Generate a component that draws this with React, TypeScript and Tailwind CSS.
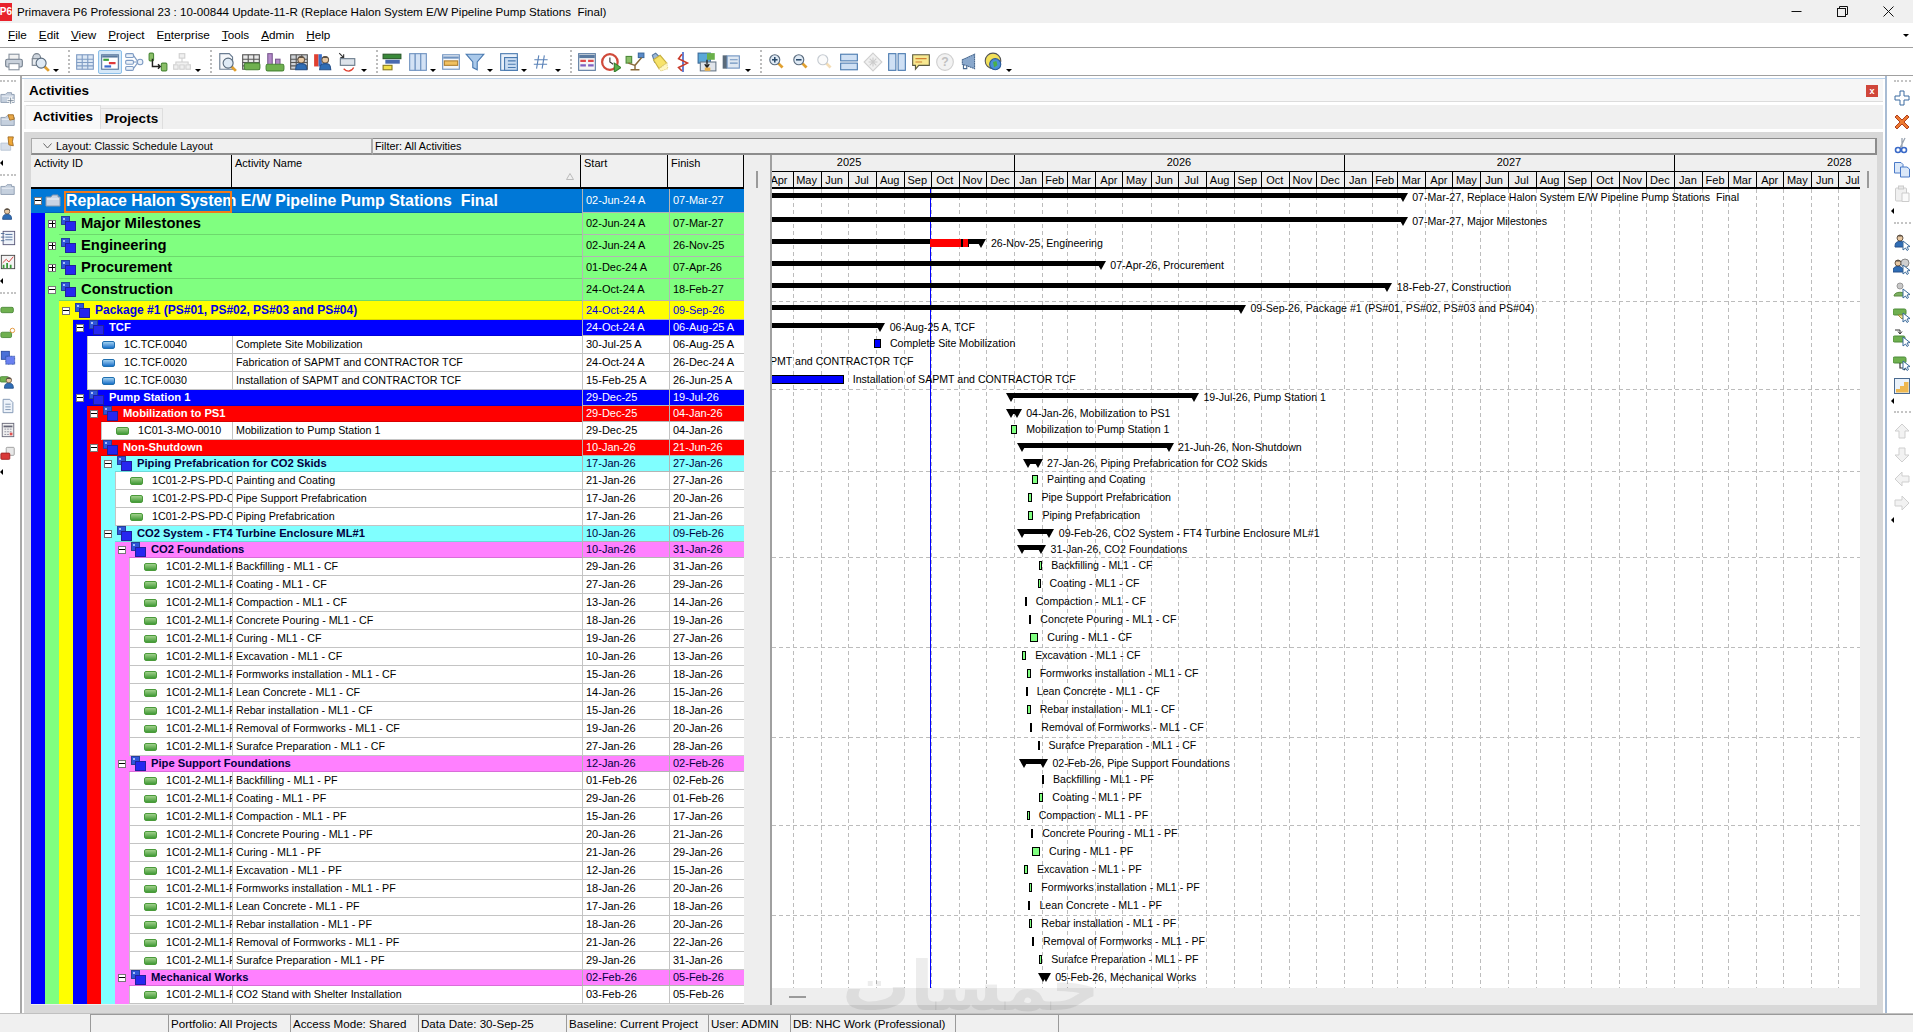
import type { ReactNode } from "react";

// ── timescale ──
const GANTT_X = 772;
const PX_PER_DAY = 0.904;
const MONTHS = ["Jan", "Feb", "Mar", "Apr", "May", "Jun", "Jul", "Aug", "Sep", "Oct", "Nov", "Dec"];

const toDays = (s: string) => {
  const [d, m, y] = s.replace(" A", "").split("-");
  return (Date.UTC(2000 + Number(y), MONTHS.indexOf(m), Number(d)) - Date.UTC(2026, 0, 1)) / 86400000;
};
const xOf = (s: string) => 1014 - GANTT_X + toDays(s) * PX_PER_DAY;
const monthX = (y: number, m: number) =>
  1014 - GANTT_X + ((Date.UTC(y, m, 1) - Date.UTC(2026, 0, 1)) / 86400000) * PX_PER_DAY;

// ── row data ──
type Row = {
  id?: string;
  name: string;
  start: string;
  finish: string;
  level: number;
  band?: boolean;
  open?: boolean;
  blue?: boolean;
  h: number;
};

const band = (level: number, name: string, start: string, finish: string, h = 16, open = true): Row => ({
  level,
  name,
  start,
  finish,
  h,
  open,
  band: true,
});
const act = (level: number, id: string, name: string, start: string, finish: string, blue = false): Row => ({
  level,
  id,
  name,
  start,
  finish,
  h: 18,
  blue,
});

const mlRows = (tag: string, dates: string[][]) =>
  [
    "Backfilling",
    "Coating",
    "Compaction",
    "Concrete Pouring",
    "Curing",
    "Excavation",
    "Formworks installation",
    "Lean Concrete",
    "Rebar installation",
    "Removal of Formworks",
    "Surafce Preparation",
  ].map((n, i) => act(6, "1C01-2-ML1-PS-FD-0010", `${n} - ML1 - ${tag}`, dates[i][0], dates[i][1]));

const rows: Row[] = [
  band(0, "Replace Halon System E/W Pipeline Pump Stations  Final", "02-Jun-24 A", "07-Mar-27", 24),
  band(1, "Major Milestones", "02-Jun-24 A", "07-Mar-27", 22, false),
  band(1, "Engineering", "02-Jun-24 A", "26-Nov-25", 22, false),
  band(1, "Procurement", "01-Dec-24 A", "07-Apr-26", 22, false),
  band(1, "Construction", "24-Oct-24 A", "18-Feb-27", 22),
  band(2, "Package #1 (PS#01, PS#02, PS#03 and PS#04)", "24-Oct-24 A", "09-Sep-26", 19),
  band(3, "TCF", "24-Oct-24 A", "06-Aug-25 A"),
  act(3, "1C.TCF.0040", "Complete Site Mobilization", "30-Jul-25 A", "06-Aug-25 A", true),
  act(3, "1C.TCF.0020", "Fabrication of SAPMT and CONTRACTOR TCF", "24-Oct-24 A", "26-Dec-24 A", true),
  act(3, "1C.TCF.0030", "Installation of SAPMT and CONTRACTOR TCF", "15-Feb-25 A", "26-Jun-25 A", true),
  band(3, "Pump Station 1", "29-Dec-25", "19-Jul-26"),
  band(4, "Mobilization to PS1", "29-Dec-25", "04-Jan-26"),
  act(4, "1C01-3-MO-0010", "Mobilization to Pump Station 1", "29-Dec-25", "04-Jan-26"),
  band(4, "Non-Shutdown", "10-Jan-26", "21-Jun-26"),
  band(5, "Piping Prefabrication for CO2 Skids", "17-Jan-26", "27-Jan-26"),
  act(5, "1C01-2-PS-PD-CO-0010", "Painting and Coating", "21-Jan-26", "27-Jan-26"),
  act(5, "1C01-2-PS-PD-CO-0020", "Pipe Support Prefabrication", "17-Jan-26", "20-Jan-26"),
  act(5, "1C01-2-PS-PD-CO-0030", "Piping Prefabrication", "17-Jan-26", "21-Jan-26"),
  band(5, "CO2 System - FT4 Turbine Enclosure ML#1", "10-Jan-26", "09-Feb-26"),
  band(6, "CO2 Foundations", "10-Jan-26", "31-Jan-26"),
  ...mlRows("CF", [
    ["29-Jan-26", "31-Jan-26"],
    ["27-Jan-26", "29-Jan-26"],
    ["13-Jan-26", "14-Jan-26"],
    ["18-Jan-26", "19-Jan-26"],
    ["19-Jan-26", "27-Jan-26"],
    ["10-Jan-26", "13-Jan-26"],
    ["15-Jan-26", "18-Jan-26"],
    ["14-Jan-26", "15-Jan-26"],
    ["15-Jan-26", "18-Jan-26"],
    ["19-Jan-26", "20-Jan-26"],
    ["27-Jan-26", "28-Jan-26"],
  ]),
  band(6, "Pipe Support Foundations", "12-Jan-26", "02-Feb-26"),
  ...mlRows("PF", [
    ["01-Feb-26", "02-Feb-26"],
    ["29-Jan-26", "01-Feb-26"],
    ["15-Jan-26", "17-Jan-26"],
    ["20-Jan-26", "21-Jan-26"],
    ["21-Jan-26", "29-Jan-26"],
    ["12-Jan-26", "15-Jan-26"],
    ["18-Jan-26", "20-Jan-26"],
    ["17-Jan-26", "18-Jan-26"],
    ["18-Jan-26", "20-Jan-26"],
    ["21-Jan-26", "22-Jan-26"],
    ["29-Jan-26", "31-Jan-26"],
  ]),
  band(6, "Mechanical Works", "02-Feb-26", "05-Feb-26"),
  act(6, "1C01-2-ML1-PS-ME-0010", "CO2 Stand with Shelter Installation", "03-Feb-26", "05-Feb-26"),
];

const STRIPES = ["bg-[#0000ff]", "bg-[#80ff80]", "bg-[#ffff00]", "bg-[#0000ff]", "bg-[#ff0000]", "bg-[#80ffff]", "bg-[#ff80ff]"];
const BANDS = [
  "bg-[#0078d7] text-white",
  "bg-[#80ff80] text-black",
  "bg-[#ffff00] text-[#0000e0]",
  "bg-[#0000ff] text-white",
  "bg-[#ff0000] text-white",
  "bg-[#80ffff] text-[#000040]",
  "bg-[#ff80ff] text-[#000040]",
];
const TITLE_SIZE = ["text-[15.9px]", "text-[14.8px]", "text-[12px]", "text-[11.2px]", "text-[11.2px]", "text-[11.2px]", "text-[11.2px]"];

// ── toolbar icons ──
const Ico = ({ children, s = 18 }: { children: ReactNode; s?: number }) => (
  <svg width={s} height={s} viewBox="0 0 18 18" fill="none" strokeWidth="1">
    {children}
  </svg>
);
const Person = ({ x = 5, y = 2 }: { x?: number; y?: number }) => (
  <g transform={`translate(${x} ${y})`}>
    <circle cx="4" cy="4" r="3" fill="#e8c9a4" stroke="#6b5a48" />
    <path d="M1 3.5 C1 0 7 0 7 3.5 L6 2.5 L2 2.5Z" fill="#5a5147" />
    <path d="M-1 13 C-1 8 1 7.5 4 7.5 C7 7.5 9 8 9 13Z" fill="#2f6db5" stroke="#27518a" />
  </g>
);
const Pill = ({ x = 1, y = 6, w = 15, c = "#6fb04f" }: { x?: number; y?: number; w?: number; c?: string }) => (
  <rect x={x} y={y} width={w} height="6" rx="1.5" fill={c} stroke="#4d8a3a" />
);
const Lens = ({ x = 8, y = 8, c = "#dfeaf5", sign = "" }: { x?: number; y?: number; c?: string; sign?: string }) => (
  <g transform={`translate(${x} ${y})`}>
    <path d="M4 4 L8 8" stroke="#e0a030" strokeWidth="2.5" />
    <circle cx="1" cy="1" r="4.5" fill={c} stroke="#5a6b7d" />
    {sign && <path d="M-1.5 1 H3.5" stroke="#2a4a6a" strokeWidth="1.4" />}
    {sign === "+" && <path d="M1 -1.5 V3.5" stroke="#2a4a6a" strokeWidth="1.4" />}
  </g>
);
const Folder = ({ c = "#c5d0de" }: { c?: string }) => (
  <g>
    <path d="M1 5 H6 L8 3 H13 V5 H16 V14 H1Z" fill={c} stroke="#8d9cb0" />
    <path d="M2 7 H15" stroke="#eef2f7" />
  </g>
);
const Grid = ({ c = "#dde8f5", s = "#7f9cc4" }: { c?: string; s?: string }) => (
  <g stroke={s}>
    <rect x="1.5" y="2.5" width="15" height="13" fill={c} />
    <path d="M1.5 6.5 H16.5 M1.5 9.5 H16.5 M1.5 12.5 H16.5 M6.5 2.5 V15.5 M11.5 2.5 V15.5" />
  </g>
);
const Ptr = () => <path d="M10 8 L10 17 L12.5 15 L14 17.5 L15.5 16.5 L14 14 L17 13.5Z" fill="#fff" stroke="#3a6a9a" />;

const I: Record<string, ReactNode> = {
  print: (
    <Ico s={20}>
      <rect x="4.5" y="2" width="9" height="5" fill="#f2f2f2" stroke="#8a94a0" />
      <rect x="1.5" y="6.5" width="15" height="7" rx="1.5" fill="#c8d0da" stroke="#75808e" />
      <rect x="4.5" y="10.5" width="9" height="5.5" fill="#fff" stroke="#8a94a0" />
    </Ico>
  ),
  report: (
    <Ico s={20}>
      <circle cx="6" cy="5" r="3.5" fill="#cfd6de" stroke="#77818d" />
      <rect x="2" y="6" width="9" height="6" fill="#e8ecf0" stroke="#77818d" />
      <Lens x={9} y={9} />
    </Ico>
  ),
  table: (
    <Ico s={20}>
      <Grid />
    </Ico>
  ),
  gantt: (
    <Ico s={20}>
      <rect x="1.5" y="2.5" width="15" height="13" fill="#fff" stroke="#58789e" />
      <path d="M2 4 H16" stroke="#58789e" strokeWidth="2" />
      <path d="M3 7 H8" stroke="#3aa03a" strokeWidth="2" />
      <path d="M8 10 H14" stroke="#e03a3a" strokeWidth="2" />
      <path d="M4 13 H10" stroke="#3a6ad0" strokeWidth="2" />
    </Ico>
  ),
  nodes: (
    <Ico s={20}>
      <g fill="#eaf1f9" stroke="#7f9cc4">
        <rect x="1.5" y="1.5" width="7" height="3.5" rx="1" />
        <rect x="1.5" y="7.5" width="7" height="3.5" rx="1" />
        <rect x="1.5" y="13" width="7" height="3.5" rx="1" />
        <circle cx="14.5" cy="9" r="2.5" />
        <path d="M8.5 3 L12 8 M8.5 9 H12 M8.5 15 L12 10" />
      </g>
    </Ico>
  ),
  net: (
    <Ico s={20}>
      <rect x="1" y="1" width="4" height="7" rx="1" fill="#8bbf68" stroke="#4d8a3a" />
      <rect x="12" y="10" width="5" height="7" rx="1" fill="#8bbf68" stroke="#4d8a3a" />
      <path d="M4 6 V13 H11 M9 11 L11 13 L9 15" stroke="#222" strokeWidth="1.3" />
    </Ico>
  ),
  org: (
    <Ico s={20}>
      <g fill="#f0f0f0" stroke="#d0d0d0">
        <rect x="6.5" y="1.5" width="5" height="4" />
        <rect x="1.5" y="11.5" width="4" height="4" />
        <rect x="7" y="11.5" width="4" height="4" />
        <rect x="12.5" y="11.5" width="4" height="4" />
        <path d="M9 5.5 V9 M3.5 11 V9 H14.5 V11" />
      </g>
    </Ico>
  ),
  docA: (
    <Ico s={20}>
      <path d="M2.5 1.5 H11 L14 4.5 V15.5 H2.5Z" fill="#f5f7fa" stroke="#6b7d92" />
      <Lens x={9} y={9} />
    </Ico>
  ),
  gridGreen: (
    <Ico s={20}>
      <Grid c="#e8e8e8" s="#555" />
      <Pill x={3} y={10} w={14} />
    </Ico>
  ),
  barsGreen: (
    <Ico s={20}>
      <rect x="2.5" y="1.5" width="4" height="11" fill="#b489c9" stroke="#7a5a90" />
      <rect x="9.5" y="6.5" width="4" height="6" fill="#b489c9" stroke="#7a5a90" />
      <Pill x={1} y={11} w={16} />
    </Ico>
  ),
  gridPerson: (
    <Ico s={20}>
      <Grid c="#cfd2d6" s="#555" />
      <Person x={7} y={3} />
    </Ico>
  ),
  colorPerson: (
    <Ico s={20}>
      <rect x="1" y="2" width="4" height="11" fill="#e04030" />
      <rect x="5" y="2" width="3" height="11" fill="#3a70c8" />
      <Person x={7} y={3} />
    </Ico>
  ),
  moveBar: (
    <Ico s={20}>
      <path d="M2 1 L6 5 M6 2 V5 H3" stroke="#333" />
      <rect x="3" y="6" width="13" height="6" fill="#dde3ea" stroke="#6a7a8a" />
      <path d="M6 15 C9 18 13 18 15 14" stroke="#e04030" strokeWidth="1.2" />
    </Ico>
  ),
  stack: (
    <Ico s={20}>
      <rect x="1" y="2" width="16" height="4" fill="#3a8a3a" stroke="#2a5a2a" />
      <rect x="3" y="7" width="13" height="3.5" fill="#4a6ab0" />
      <rect x="1" y="12" width="8" height="4" fill="#f2e04a" stroke="#887a20" />
    </Ico>
  ),
  cols: (
    <Ico s={20}>
      <g fill="#d3e2f5" stroke="#6f93c0">
        <rect x="1.5" y="1.5" width="5" height="15" />
        <rect x="6.5" y="1.5" width="5" height="15" />
        <rect x="11.5" y="1.5" width="5" height="15" />
      </g>
    </Ico>
  ),
  cal: (
    <Ico s={20}>
      <rect x="1.5" y="2.5" width="15" height="13" fill="#f4f7fb" stroke="#6f93c0" />
      <path d="M2 5 H16" stroke="#6f93c0" strokeWidth="2" />
      <rect x="3" y="8" width="12" height="4" fill="#f0c060" stroke="#b08030" />
    </Ico>
  ),
  filter: (
    <Ico s={20}>
      <path d="M1 2 H17 L11 9 V16 L7 14 V9Z" fill="#aac9ea" stroke="#4a7ab0" />
    </Ico>
  ),
  layout: (
    <Ico s={20}>
      <rect x="1.5" y="1.5" width="15" height="15" fill="#e8f0fa" stroke="#4a7ab0" />
      <rect x="5" y="5" width="11.5" height="11.5" fill="#c8dcf2" stroke="#4a7ab0" />
      <path d="M8 8 H15 M8 11 H15 M8 14 H15" stroke="#4a7ab0" />
    </Ico>
  ),
  hash: (
    <Ico s={20}>
      <path d="M7 3 L5 15 M12 3 L10 15 M3 7 H15 M2.5 11 H14.5" stroke="#5a82b8" />
    </Ico>
  ),
  tableColor: (
    <Ico s={20}>
      <rect x="1.5" y="1.5" width="15" height="15" fill="#f5f5f5" stroke="#5a7aa0" />
      <path d="M2 4 H16" stroke="#5a7aa0" strokeWidth="3" />
      <path d="M3 8 H8 M10 8 H15" stroke="#e04848" strokeWidth="2" />
      <path d="M3 12 H8 M10 12 H15" stroke="#8060c0" strokeWidth="2" />
    </Ico>
  ),
  clock: (
    <Ico s={20}>
      <circle cx="8" cy="9" r="7" fill="#fff" stroke="#d04a3a" strokeWidth="2" />
      <path d="M8 5 V9 L11 11" stroke="#333" />
      <path d="M12 10 L18 14 L12 18Z" fill="#5ab04a" stroke="#3a8030" />
    </Ico>
  ),
  tree: (
    <Ico s={20}>
      <rect x="1" y="4" width="5" height="6" fill="#8bbf68" stroke="#4d8a3a" />
      <rect x="12" y="1" width="5" height="4" fill="#5a8ac8" stroke="#3a6aa0" />
      <path d="M3 10 L9 12 L15 5 M9 12 V16 M5 16 H13" stroke="#8a6a3a" strokeWidth="1.3" />
    </Ico>
  ),
  lights: (
    <Ico s={20}>
      <path d="M3 3 L6 1 L10 5 L5 9Z" fill="#9cb8d8" stroke="#5a7aa0" />
      <path d="M4 7 L10 3 L16 10 L9 15Z" fill="#f7e36a" stroke="#c8b040" />
      <path d="M9 15 L16 10 L17 15 L11 17Z" fill="#fff7c0" stroke="#e0d080" strokeDasharray="1 1" />
    </Ico>
  ),
  redLine: (
    <Ico s={20}>
      <path d="M9 0 V18" stroke="#2a50c0" strokeWidth="1.3" />
      <path d="M8 2 L5 6 L13 10 L5 14 L8 17" stroke="#c83a2a" strokeWidth="1.4" />
    </Ico>
  ),
  monitor: (
    <Ico s={20}>
      <rect x="1" y="1" width="11" height="9" fill="#5aa8d8" stroke="#3a6a9a" />
      <rect x="9" y="1" width="7" height="6" fill="#6ab04a" />
      <rect x="3" y="9" width="14" height="8" fill="#e0e4ea" stroke="#6a7a8a" />
      <path d="M9 7 V13 M7 11 L9 14 L11 11" stroke="#222" strokeWidth="1.2" />
      <rect x="7" y="14" width="5" height="3" fill="#e8b050" />
    </Ico>
  ),
  panel: (
    <Ico s={20}>
      <rect x="1.5" y="3" width="4" height="12" fill="#5a6a7a" />
      <rect x="5.5" y="3.5" width="11" height="11" fill="#dfe8f2" stroke="#6f93c0" />
      <path d="M8 7 H15 M8 10 H15" stroke="#6f93c0" />
    </Ico>
  ),
  zoomIn: (
    <Ico s={20}>
      <Lens x={6} y={6} sign="+" />
    </Ico>
  ),
  zoomOut: (
    <Ico s={20}>
      <Lens x={6} y={6} sign="-" />
    </Ico>
  ),
  zoomFit: (
    <Ico s={20}>
      <g opacity="0.35">
        <Lens x={6} y={6} c="#f5f5f5" />
      </g>
    </Ico>
  ),
  hPanes: (
    <Ico s={20}>
      <g fill="#cfe0f4" stroke="#4a7ab0">
        <rect x="1.5" y="2" width="15" height="6" />
        <rect x="1.5" y="10" width="15" height="6" />
      </g>
    </Ico>
  ),
  diamond: (
    <Ico s={20}>
      <path d="M9 1 L17 9 L9 17 L1 9Z" fill="#f0f0f0" stroke="#d0d0d0" />
      <path d="M9 5 V13 M5 9 H13 M6 6 L12 12 M12 6 L6 12" stroke="#ccc" />
    </Ico>
  ),
  vPanes: (
    <Ico s={20}>
      <g fill="#cfe0f4" stroke="#4a7ab0">
        <rect x="1.5" y="1.5" width="6.5" height="15" />
        <rect x="10" y="1.5" width="6.5" height="15" />
      </g>
    </Ico>
  ),
  note: (
    <Ico s={20}>
      <path d="M1.5 2.5 H16.5 V12 H7 L4 15.5 V12 H1.5Z" fill="#f7e890" stroke="#5a5a40" />
      <path d="M4 6 H14 M4 9 H10" stroke="#d08030" />
    </Ico>
  ),
  help: (
    <Ico s={20}>
      <circle cx="9" cy="9" r="7.5" fill="#f2f2f2" stroke="#cfcfcf" />
      <text x="9" y="13" textAnchor="middle" fontSize="11" fontWeight="700" fill="#c0c0c0">
        ?
      </text>
    </Ico>
  ),
  horn: (
    <Ico s={20}>
      <path d="M3 7 L14 2 V15 L3 11Z" fill="#8aa8cc" stroke="#4a6a90" strokeDasharray="1.5 0.5" />
      <path d="M4 11 V15 H7 V12" stroke="#4a6a90" />
    </Ico>
  ),
  globe: (
    <Ico s={20}>
      <circle cx="9" cy="8" r="7" fill="#f2e05a" stroke="#555" />
      <circle cx="11" cy="11" r="5" fill="#4a90d8" stroke="#2a5a9a" />
      <path d="M9 9 L12 8 L13 12 L10 14Z" fill="#4ab04a" />
    </Ico>
  ),
  // side bars
  folderPlus: (
    <Ico>
      <Folder />
      <path d="M12 8 V16 M8 12 H16" stroke="#fff" strokeWidth="3" />
      <path d="M12 8.5 V15.5 M8.5 12 H15.5" stroke="#708090" />
    </Ico>
  ),
  folderOpen: (
    <Ico>
      <Folder />
      <path d="M9 2 L15 2 L16 7 L11 8Z" fill="#e8a848" stroke="#a06a20" />
    </Ico>
  ),
  folderFlag: (
    <Ico>
      <path d="M1 8 H12 V16 H1Z" fill="#d6deea" stroke="#b8c4d4" />
      <path d="M9 1 L15 1 L14 6 L15 11 L10 10Z" fill="#f0a838" stroke="#a06a20" />
    </Ico>
  ),
  folder: (
    <Ico>
      <Folder />
    </Ico>
  ),
  person: (
    <Ico>
      <Person x={4} y={2} />
    </Ico>
  ),
  notebook: (
    <Ico>
      <rect x="3.5" y="1.5" width="13" height="15" fill="#eef3fa" stroke="#557" />
      <path d="M6 5 H14 M6 8 H14 M6 11 H14 M1 4 H5 M1 8 H5 M1 12 H5" stroke="#4a6a98" />
    </Ico>
  ),
  chart: (
    <Ico>
      <rect x="1.5" y="1.5" width="15" height="15" fill="#f4f4f4" stroke="#444" />
      <path d="M3 10 L7 6 L10 9 L15 3" stroke="#d03030" />
      <path d="M4 16 V12 M8 16 V10 M12 16 V12" stroke="#3a9a3a" strokeWidth="2" />
    </Ico>
  ),
  green: (
    <Ico>
      <Pill x={1} y={6} w={14} />
    </Ico>
  ),
  green2: (
    <Ico>
      <Pill x={1} y={7} w={12} />
      <circle cx="14" cy="5" r="2.5" stroke="#e09030" />
    </Ico>
  ),
  wbs: (
    <Ico>
      <rect x="1.5" y="1.5" width="9" height="9" fill="#4a70d8" stroke="#2a4aa0" />
      <rect x="6.5" y="7" width="10" height="9" fill="#6a80f0" stroke="#2a4aa0" strokeDasharray="1 0.5" />
    </Ico>
  ),
  greenPerson: (
    <Ico>
      <Pill x={0} y={3} w={10} />
      <Person x={6} y={3} />
    </Ico>
  ),
  doc: (
    <Ico>
      <path d="M3.5 1.5 H11 L14.5 5 V16.5 H3.5Z" fill="#eef3fa" stroke="#7a90b0" />
      <path d="M6 7 H12 M6 10 H12 M6 13 H12" stroke="#7a90b0" />
    </Ico>
  ),
  calc: (
    <Ico>
      <rect x="2.5" y="1.5" width="13" height="15" fill="#f0f0f0" stroke="#667" />
      <path d="M4 5 H14" stroke="#667" strokeWidth="2" />
      <path d="M5 8 H13 M5 11 H13 M5 14 H10" stroke="#889" strokeDasharray="2 1" />
      <rect x="11" y="12" width="3" height="3" fill="#e05050" />
    </Ico>
  ),
  dice: (
    <Ico>
      <rect x="7" y="1.5" width="9" height="9" rx="1" fill="#e8e8e8" stroke="#999" />
      <rect x="1" y="8" width="10" height="7" rx="1" fill="#d83838" stroke="#a02020" />
    </Ico>
  ),
  plus: (
    <Ico>
      <path d="M7 2 H11 V7 H16 V11 H11 V16 H7 V11 H2 V7 H7Z" fill="#fff" stroke="#3a6aa0" />
    </Ico>
  ),
  del: (
    <Ico>
      <path d="M2 4 L4 2 L9 7 L14 2 L16 4 L11 9 L16 14 L14 16 L9 11 L4 16 L2 14 L7 9Z" fill="#ee7a30" stroke="#b04020" />
    </Ico>
  ),
  cut: (
    <Ico>
      <path d="M12 1 L7 11 M9 1 V11" stroke="#9aa4b0" strokeWidth="1.3" />
      <circle cx="5" cy="13" r="2.5" stroke="#3a6ac8" strokeWidth="1.6" />
      <circle cx="11" cy="13" r="2.5" stroke="#3a6ac8" strokeWidth="1.6" />
    </Ico>
  ),
  copy: (
    <Ico>
      <path d="M1.5 1.5 H8 L10 3.5 V12 H1.5Z" fill="#dbe8f8" stroke="#4a7ac8" />
      <path d="M7.5 6 H14 L16.5 8 V16 H7.5Z" fill="#dbe8f8" stroke="#4a7ac8" />
    </Ico>
  ),
  paste: (
    <Ico>
      <rect x="2.5" y="3" width="11" height="13" rx="1" fill="#f0f0f0" stroke="#ccc" />
      <rect x="5.5" y="1" width="5" height="3" fill="#e8e8e8" stroke="#ccc" />
      <path d="M9 8 H16 V16.5 H9Z" fill="#fafafa" stroke="#ccc" />
    </Ico>
  ),
  pPerson: (
    <Ico>
      <Person x={3} y={1} />
      <Ptr />
    </Ico>
  ),
  pTwo: (
    <Ico>
      <Person x={1} y={2} />
      <circle cx="12" cy="6" r="4" fill="#d0d0d0" stroke="#888" />
      <Ptr />
    </Ico>
  ),
  pGrey: (
    <Ico>
      <circle cx="7" cy="5" r="3" fill="#c8c8c8" stroke="#999" />
      <path d="M1 15 C1 10 13 10 13 15Z" fill="#7cb060" stroke="#5a8a40" />
      <Ptr />
    </Ico>
  ),
  pGreen: (
    <Ico>
      <Pill x={0} y={4} w={13} />
      <path d="M5 10 L9 14 L13 10Z" fill="#f0e090" stroke="#a09040" />
      <Ptr />
    </Ico>
  ),
  pArrow: (
    <Ico>
      <path d="M2 1 H7 V4 M5 2.5 L7 5 L9 2.5" stroke="#333" />
      <Pill x={0} y={7} w={12} />
      <Ptr />
    </Ico>
  ),
  pOut: (
    <Ico>
      <Pill x={0} y={4} w={13} />
      <path d="M7 10 V15 H13 M11 13 L13 15 L11 17" stroke="#333" strokeWidth="1.2" />
      <Ptr />
    </Ico>
  ),
  stairs: (
    <Ico>
      <rect x="1.5" y="1.5" width="15" height="15" fill="#eaf2fa" stroke="#4a6a90" />
      <path d="M3 15.5 V12 H7 V9 H11 V5 H15.5 V15.5Z" fill="#eeb850" />
    </Ico>
  ),
  up: (
    <Ico>
      <path d="M9 2 L16 9 H12 V16 H6 V9 H2Z" fill="#f2f2f2" stroke="#cfcfcf" />
    </Ico>
  ),
  down: (
    <Ico>
      <path d="M9 16 L16 9 H12 V2 H6 V9 H2Z" fill="#f2f2f2" stroke="#cfcfcf" />
    </Ico>
  ),
  left: (
    <Ico>
      <path d="M2 9 L9 2 V6 H16 V12 H9 V16Z" fill="#f2f2f2" stroke="#cfcfcf" />
    </Ico>
  ),
  right: (
    <Ico>
      <path d="M16 9 L9 2 V6 H2 V12 H9 V16Z" fill="#f2f2f2" stroke="#cfcfcf" />
    </Ico>
  ),
};

// ── small parts ──
const Tool = ({ name, active, className = "" }: { name: string; active?: boolean; className?: string }) => (
  <div
    className={`flex h-6 w-6 shrink-0 items-center justify-center ${
      active ? "rounded-[2px] border border-[#8cc0ea] bg-[#d5e8f8]" : ""
    } ${className}`}
  >
    {I[name]}
  </div>
);
const Drop = ({ className = "" }: { className?: string }) => (
  <div className={`flex h-6 w-2 shrink-0 items-end justify-center pb-[2px] ${className}`}>
    <div className="h-0 w-0 border-x-[3px] border-t-[3px] border-x-transparent border-t-black" />
  </div>
);
const Sep = ({ className = "" }: { className?: string }) => (
  <div className={`h-[23px] w-[2px] shrink-0 border-l-2 border-dotted border-[#bcbcbc] ${className}`} />
);
const SideDots = ({ className = "" }: { className?: string }) => (
  <div className={`flex items-center justify-center ${className}`}>
    <div className="w-[17px] border-t-2 border-dotted border-[#c4c4c4]" />
  </div>
);
const SideArrow = ({ className = "" }: { className?: string }) => (
  <div className={`flex items-center justify-start ${className}`}>
    <div className="h-0 w-0 border-y-[3px] border-r-[3px] border-y-transparent border-r-black" />
  </div>
);
const SideTool = ({ name }: { name: string }) => <div className="flex h-6 items-center justify-center">{I[name]}</div>;

const ExpandBox = ({ open }: { open: boolean }) => (
  <div className="relative h-[8px] w-[8px] shrink-0 border border-[#777] bg-white">
    <div className="absolute left-0 top-[2px] h-px w-[6px] bg-black" />
    {!open && <div className="absolute left-[2.5px] top-0 h-[6px] w-px bg-black" />}
  </div>
);

const WbsIcon = () => (
  <svg width="15" height="15" viewBox="0 0 15 15" className="shrink-0">
    <rect x="0.5" y="0.5" width="8" height="8" fill="#2f55d8" stroke="#24409c" />
    <rect x="2" y="2" width="2" height="2" fill="#a8c0f8" />
    <rect x="4.5" y="5.5" width="10" height="9" fill="#2626f0" stroke="#20209c" />
  </svg>
);

const ActIcon = ({ blue }: { blue?: boolean }) => (
  <div
    className={`h-[8px] w-[13px] shrink-0 rounded-[2px] border bg-linear-to-b ${
      blue ? "border-[#1f6fb0] from-[#9fd0f0] to-[#0f70c8]" : "border-[#4a9a3a] from-[#9fd08a] to-[#3f9a35]"
    }`}
  />
);

// ── table ──
const TableRow = ({ r }: { r: Row }) => {
  const stripes = r.band ? r.level : r.level + 1;
  return (
    <div className="flex shrink-0" style={{ height: r.h }}>
      {STRIPES.slice(0, stripes).map((c, i) => (
        <div key={i} className={`w-[14px] shrink-0 ${c}`} />
      ))}
      {r.band ? <BandCells r={r} /> : <ActCells r={r} />}
    </div>
  );
};

const BandCells = ({ r }: { r: Row }) => (
  <div className={`flex min-w-0 flex-1 ${BANDS[r.level]}`}>
    <div className="flex w-[14px] shrink-0 items-center pl-[3px]">
      <ExpandBox open={r.open ?? true} />
    </div>
    <div className="flex min-w-0 flex-1 items-center border-b border-black/15 pl-[2px]">
      {r.level === 0 ? (
        <svg width="16" height="13" viewBox="0 0 16 13" className="-ml-[2px] shrink-0">
          <path d="M1 3 H6 L7.5 1 H13 V3 H15 V12 H1Z" fill="#c8d4e4" stroke="#8899ae" />
          <path d="M2 5 H14" stroke="#eef3f8" />
        </svg>
      ) : (
        <WbsIcon />
      )}
      <span className={`ml-[5px] whitespace-pre font-bold leading-none ${TITLE_SIZE[r.level]}`}>{r.name}</span>
    </div>
    <div className="flex w-[87px] shrink-0 items-center border-b border-l border-[#b4b4b4] pl-[3px] text-[11px]">{r.start}</div>
    <div className="flex w-[75px] shrink-0 items-center border-b border-l border-[#b4b4b4] pl-[3px] text-[11px]">{r.finish}</div>
  </div>
);

const ActCells = ({ r }: { r: Row }) => (
  <div className="flex min-w-0 flex-1 border-b border-[#c4c4c4] bg-white text-[10.7px] text-black">
    <div className="flex min-w-0 flex-1 items-center overflow-hidden whitespace-nowrap border-l border-[#c4c4c4] pl-[14px]">
      <ActIcon blue={r.blue} />
      <span className="ml-[9px]">{r.id}</span>
    </div>
    <div className="flex w-[350px] shrink-0 items-center whitespace-pre border-l border-[#c4c4c4] pl-[3px]">{r.name}</div>
    <div className="flex w-[87px] shrink-0 items-center border-l border-[#c4c4c4] pl-[3px] text-[11px]">{r.start}</div>
    <div className="flex w-[75px] shrink-0 items-center border-l border-[#c4c4c4] pl-[3px] text-[11px]">{r.finish}</div>
  </div>
);

// ── gantt ──
const Tri = ({ x, top }: { x: number; top: number }) => (
  <svg width="10" height="9" viewBox="0 0 10 9" className="absolute" style={{ left: x - 5, top }}>
    <path d="M0 0 H10 L5 9Z" fill="#000" />
  </svg>
);

const GanttRow = ({ r }: { r: Row }) => {
  const s = xOf(r.start);
  const e = xOf(r.finish);
  const top = r.h === 16 ? 3 : 4;
  if (r.band) {
    return (
      <div className="relative shrink-0" style={{ height: r.h }}>
        <div className="absolute h-[5px] bg-black" style={{ left: s, width: e - s, top }} />
        <Tri x={s} top={top} />
        <Tri x={e} top={top} />
        {r.name === "Engineering" && (
          <div className="absolute flex h-[8px] items-stretch bg-black" style={{ left: 158, width: 39, top }}>
            <div className="w-[31px] bg-[#ff0000]" />
            <div className="ml-[2px] w-[5px] bg-[#ff0000]" />
          </div>
        )}
        <div
          className="absolute whitespace-pre text-[10.6px] leading-[15px] text-black"
          style={{ left: e + 9.5, top: r.h > 19 ? 1 : 0 }}
        >
          {`${r.finish}, ${r.name}`}
        </div>
      </div>
    );
  }
  const w = Math.max(2, Math.round(e - s + 1));
  return (
    <div className="relative shrink-0" style={{ height: r.h }}>
      <div
        className={`absolute top-[3px] h-[9px] border border-black ${r.blue ? "bg-[#0000ff]" : "bg-[#80ff80]"}`}
        style={{ left: s, width: w }}
      />
      <div className="absolute top-0 whitespace-pre text-[10.6px] leading-[15px] text-black" style={{ left: s + w + 9 }}>
        {r.name}
      </div>
    </div>
  );
};

const monthCells: { x: number; label: string }[] = [];
for (let y = 2025; y <= 2028; y++) {
  for (let m = 0; m < 12; m++) {
    const x = monthX(y, m);
    if (x > -40 && x < 1100) monthCells.push({ x, label: MONTHS[m] });
  }
}

const GRID_ROWS = [301, 389, 471, 557, 647, 737, 825, 915];

const GanttHeader = () => (
  <div className="relative h-[34px] shrink-0 overflow-hidden border-b-2 border-black bg-[#efefef] text-[11px] text-black">
    <div className="absolute inset-x-0 top-[16px] h-px bg-black" />
    {[2025, 2026, 2027, 2028].map((y) => (
      <div key={y}>
        <div
          className="absolute -top-px text-center leading-[16px]"
          style={{ left: monthX(y, 0), width: monthX(y + 1, 0) - monthX(y, 0) }}
        >
          {y}
        </div>
        <div className="absolute top-0 h-[16px] w-px bg-black" style={{ left: monthX(y, 0) }} />
      </div>
    ))}
    {monthCells.map((m, i) => (
      <div key={i} className="absolute top-[17px] h-[16px]" style={{ left: m.x, width: (monthCells[i + 1]?.x ?? m.x + 27) - m.x }}>
        <div className="absolute inset-y-0 left-0 w-px bg-black" />
        <div className="text-center leading-[16px]">{m.label}</div>
      </div>
    ))}
  </div>
);

const GanttGrid = () => (
  <svg className="absolute inset-0" width="1088" height="799">
    {monthCells.map((m, i) => (
      <line key={i} x1={Math.round(m.x) + 0.5} x2={Math.round(m.x) + 0.5} y1="0" y2="799" stroke="#bcbcbc" strokeDasharray="4 3" />
    ))}
    {GRID_ROWS.map((y) => (
      <line key={y} x1="0" x2="1088" y1={y - 189 + 0.5} y2={y - 189 + 0.5} stroke="#bcbcbc" strokeDasharray="4 3" />
    ))}
    <line x1="158.5" x2="158.5" y1="0" y2="799" stroke="#0000ff" />
  </svg>
);

// ── status bar ──
const Status = ({ w, children }: { w: string; children?: ReactNode }) => (
  <div className={`flex h-[19px] shrink-0 items-center overflow-hidden whitespace-nowrap border-l border-t border-[#9a9a9a] pl-[2px] ${w}`}>
    {children}
  </div>
);

const U = ({ c, rest }: { c: string; rest: string }) => (
  <span>
    <span className="underline">{c}</span>
    {rest}
  </span>
);

export default function App() {
  return (
    <div className="flex h-[1032px] w-[1913px] flex-col overflow-hidden bg-white font-['Liberation_Sans',sans-serif] text-black">
      {/* Title bar */}
      <div className="flex h-[23px] shrink-0 items-center bg-[#f0f0f0] text-[11.6px]">
        <div className="flex h-[18px] w-[12px] shrink-0 items-center justify-end overflow-hidden bg-[#e8212b] text-[10px] font-bold leading-none text-white">
          P6
        </div>
        <span className="ml-[5px] whitespace-pre">
          Primavera P6 Professional 23 : 10-00844 Update-11-R (Replace Halon System E/W Pipeline Pump Stations  Final)
        </span>
        <div className="ml-auto flex items-center gap-[35px] pr-[19px]">
          <svg width="11" height="11" viewBox="0 0 11 11"><path d="M0.5 5.5 H10.5" stroke="#111" /></svg>
          <svg width="11" height="11" viewBox="0 0 11 11" fill="none"><rect x="0.5" y="2.5" width="8" height="8" stroke="#111" /><path d="M2.5 2.5 V0.5 H10.5 V8.5 H8.5" stroke="#111" /></svg>
          <svg width="11" height="11" viewBox="0 0 11 11"><path d="M0.5 0.5 L10.5 10.5 M10.5 0.5 L0.5 10.5" stroke="#111" /></svg>
        </div>
      </div>

      {/* Menu */}
      <div className="flex h-[25px] shrink-0 items-center gap-3 border-b border-[#a0a0a0] pl-[8px] text-[11.7px]">
        <U c="F" rest="ile" />
        <U c="E" rest="dit" />
        <U c="V" rest="iew" />
        <U c="P" rest="roject" />
        <span>E<span className="underline">n</span>terprise</span>
        <U c="T" rest="ools" />
        <U c="A" rest="dmin" />
        <U c="H" rest="elp" />
        <div className="ml-auto mr-[4px] h-0 w-0 border-x-[3px] border-t-[3px] border-x-transparent border-t-black" />
      </div>

      {/* Main toolbar */}
      <div className="flex h-[28px] shrink-0 items-center border-b border-[#a0a0a0] pl-[2px]">
        <Tool name="print" />
        <Tool name="report" className="ml-[2px]" />
        <Drop />
        <Sep className="ml-[8px]" />
        <Tool name="table" className="ml-[3px]" />
        <Tool name="gantt" active className="ml-px" />
        <Tool name="nodes" />
        <Tool name="net" />
        <Tool name="org" />
        <Drop />
        <Sep className="ml-[8px]" />
        <Tool name="docA" className="ml-[3px]" />
        <Tool name="gridGreen" />
        <Tool name="barsGreen" />
        <Tool name="gridPerson" />
        <Tool name="colorPerson" />
        <Tool name="moveBar" />
        <Drop className="ml-px" />
        <Sep className="ml-[8px]" />
        <Tool name="stack" className="ml-[2px]" />
        <Tool name="cols" className="ml-[2px]" />
        <Drop className="-ml-[1px]" />
        <Tool name="cal" className="ml-[2px]" />
        <Tool name="filter" />
        <Drop className="-ml-[1px]" />
        <Tool name="layout" className="ml-[3px]" />
        <Drop className="-ml-[1px]" />
        <Tool name="hash" className="ml-[1px]" />
        <Drop className="ml-px" />
        <Sep className="ml-[8px]" />
        <Tool name="tableColor" className="ml-[3px]" />
        <Tool name="clock" />
        <Tool name="tree" />
        <Tool name="lights" />
        <Tool name="redLine" />
        <Tool name="monitor" />
        <Tool name="panel" />
        <Drop className="ml-px" />
        <Sep className="ml-[8px]" />
        <Tool name="zoomIn" className="ml-[3px]" />
        <Tool name="zoomOut" />
        <Tool name="zoomFit" />
        <Tool name="hPanes" />
        <Tool name="diamond" />
        <Tool name="vPanes" />
        <Tool name="note" />
        <Tool name="help" />
        <Tool name="horn" />
        <Tool name="globe" />
        <Drop />
      </div>

      <div className="flex min-h-0 flex-1">
        {/* Left icon strip */}
        <div className="flex w-[22px] shrink-0 flex-col border-r-2 border-[#a8a8a8] pr-[4px]">
          <SideDots className="h-[10px]" />
          {["folderPlus", "folderOpen", "folderFlag"].map((n) => (
            <div key={n} className="flex h-[23px] items-center">{I[n]}</div>
          ))}
          <SideArrow className="h-[16px]" />
          <SideDots className="h-[7px]" />
          {["folder", "person", "notebook", "chart"].map((n) => (
            <SideTool key={n} name={n} />
          ))}
          <SideArrow className="h-[14px]" />
          <SideDots className="h-[10px]" />
          {["green", "green2", "wbs", "greenPerson", "doc", "calc", "dice"].map((n) => (
            <SideTool key={n} name={n} />
          ))}
          <SideArrow className="h-[12px]" />
        </div>

        {/* Panel */}
        <div className="flex min-w-0 flex-1 flex-col pt-[2px]">
          <div className="flex min-h-0 flex-1 flex-col border-t border-[#bcd2ea] px-[2px]">
            <div className="flex h-[23px] shrink-0 items-center border-b border-[#dcdcdc] bg-[#f6f6f6] pl-[5px] pr-[5px] pt-[2px]">
              <span className="text-[13.5px] font-bold">Activities</span>
              <div className="ml-auto flex h-[12px] w-[12px] items-center justify-center bg-[#d0463a] text-[9px] font-bold leading-none text-white">
                x
              </div>
            </div>
            <div className="h-[3px] shrink-0 bg-white" />
            <div className="flex h-[24px] shrink-0 items-end bg-[#f0f0f0] pl-[2px]">
              <div className="flex h-[24px] w-[75px] items-center justify-center border-r border-t border-[#dedede] bg-[#f8f8f8] text-[13.5px] font-bold">
                Activities
              </div>
              <div className="flex h-[21px] w-[62px] items-center justify-center border-r border-t border-[#dedede] text-[13.5px] font-bold">
                Projects
              </div>
            </div>
            <div className="h-[3px] shrink-0 bg-white" />
            <div className="h-[6px] shrink-0 bg-[#d8d8d8]" />

            {/* Layout bar */}
            <div className="flex h-[17px] shrink-0 bg-[#d8d8d8] pl-[7px] pr-[6px] text-[10.8px]">
              <div className="flex w-[342px] shrink-0 items-center border-l border-r-2 border-t border-[#aaa] border-b-2 border-b-[#8c8c8c] bg-[#f0f0f0] pl-[11px]">
                <svg width="9" height="6" viewBox="0 0 9 6" className="mr-[4px]"><path d="M0.5 0.5 L4.5 5 L8.5 0.5" fill="none" stroke="#666" /></svg>
                Layout: Classic Schedule Layout
              </div>
              <div className="flex flex-1 items-center border-b-2 border-r-2 border-t border-[#8c8c8c] bg-[#f0f0f0] pl-[2px]">
                Filter: All Activities
              </div>
            </div>

            {/* Body */}
            <div className="flex h-[850px] shrink-0 bg-[#d8d8d8] pl-[7px] pr-[6px]">
              {/* Activity table */}
              <div className="flex w-[713px] shrink-0 flex-col overflow-hidden bg-[#eeeeee]">
                <div className="flex h-[34px] shrink-0 border-b-2 border-black bg-[#f0f0f0] text-[11px]">
                  <div className="w-[201px] shrink-0 border-r border-black pl-[3px]">Activity ID</div>
                  <div className="relative w-[349px] shrink-0 border-r border-black pl-[3px]">
                    Activity Name
                    <svg width="8" height="7" viewBox="0 0 8 7" className="absolute bottom-[7px] right-[6px]"><path d="M4 0.5 L7.5 6.5 H0.5Z" fill="none" stroke="#bbb" /></svg>
                  </div>
                  <div className="w-[87px] shrink-0 border-r border-black pl-[3px]">Start</div>
                  <div className="w-[76px] shrink-0 border-r border-black pl-[3px]">Finish</div>
                </div>
                <div className="relative flex flex-col">
                  {rows.map((r, i) => (
                    <TableRow key={i} r={r} />
                  ))}
                  <div className="absolute left-[33px] top-[2px] h-[22px] w-[168px] border-2 border-[#f07a1a]" />
                </div>
              </div>

              {/* Table scrollbar + splitter */}
              <div className="relative w-[26px] shrink-0 bg-[#eeeeee]">
                <div className="absolute left-[12px] top-[16px] h-[17px] w-[2px] bg-[#9a9a9a]" />
              </div>
              <div className="w-[2px] shrink-0 bg-[#a0a0a0]" />

              {/* Gantt */}
              <div className="flex w-[1088px] shrink-0 flex-col">
                <GanttHeader />
                <div className="relative h-[799px] shrink-0 overflow-hidden bg-white">
                  <GanttGrid />
                  <div className="absolute inset-0 flex flex-col">
                    {rows.map((r, i) => (
                      <GanttRow key={i} r={r} />
                    ))}
                  </div>
                </div>
                <div className="flex h-[17px] shrink-0 items-center bg-[#eeeeee] pl-[17px]">
                  <div className="h-[2px] w-[17px] bg-[#9a9a9a]" />
                </div>
              </div>

              {/* Gantt scrollbar */}
              <div className="relative w-[17px] shrink-0 bg-[#eeeeee]">
                <div className="absolute left-[7px] top-[16px] h-[17px] w-[2px] bg-[#9a9a9a]" />
              </div>
            </div>
            <div className="min-h-0 flex-1 bg-[#d8d8d8]" />
          </div>
        </div>

        {/* Right icon strip */}
        <div className="flex w-[28px] shrink-0 flex-col border-l-2 border-[#a8bcd4] pl-[4px]">
          <SideDots className="h-[10px]" />
          {["plus", "del", "cut", "copy", "paste"].map((n) => (
            <SideTool key={n} name={n} />
          ))}
          <SideArrow className="h-[10px]" />
          <SideDots className="h-[14px]" />
          {["pPerson", "pTwo", "pGrey", "pGreen", "pArrow", "pOut", "stairs"].map((n) => (
            <SideTool key={n} name={n} />
          ))}
          <SideArrow className="h-[6px]" />
          <SideDots className="h-[15px]" />
          {["up", "down", "left", "right"].map((n) => (
            <SideTool key={n} name={n} />
          ))}
          <SideArrow className="h-[10px]" />
        </div>
      </div>

      {/* Status bar */}
      <div className="flex h-[19px] shrink-0 border-t border-[#c0c0c0] bg-[#f0f0f0] pl-[90px] text-[11.6px]">
        <Status w="w-[78px]" />
        <Status w="w-[122px]">Portfolio: All Projects</Status>
        <Status w="w-[128px]">Access Mode: Shared</Status>
        <Status w="w-[148px]">Data Date: 30-Sep-25</Status>
        <Status w="w-[142px]">Baseline: Current Project</Status>
        <Status w="w-[82px]">User: ADMIN</Status>
        <Status w="w-[165px]">DB: NHC Work (Professional)</Status>
        <Status w="w-[103px]" />
        <Status w="flex-1" />
      </div>

      {/* Watermark */}
      <div className="pointer-events-none absolute left-[842px] top-[953px] font-['DejaVu_Sans',sans-serif] text-[68px] font-bold leading-none text-black/[0.07]">
        خمسات
      </div>
    </div>
  );
}
